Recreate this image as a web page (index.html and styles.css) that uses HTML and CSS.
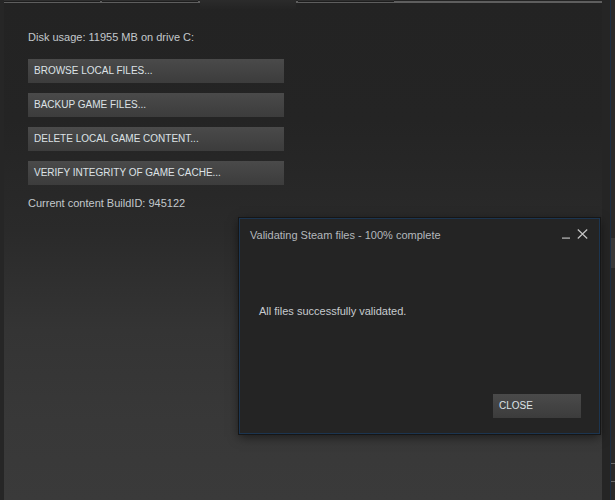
FILE: index.html
```html
<!DOCTYPE html>
<html>
<head>
<meta charset="utf-8">
<link rel="stylesheet" href="styles.css">
</head>
<body>
<div class="window">
  <div class="edge-left"></div>
  <div class="panel">
    <div class="tabs">
      <div class="tab-group first">
        <div class="tab-box"></div>
        <div class="tab-box"></div>
      </div>
      <div class="tab-active"></div>
      <div class="tab-group second">
        <div class="tab-box"></div>
      </div>
    </div>
    <div class="content">
      <p class="label">Disk usage: 11955 MB on drive C:</p>
      <div class="actions">
        <button class="btn">BROWSE LOCAL FILES...</button>
        <button class="btn">BACKUP GAME FILES...</button>
        <button class="btn">DELETE LOCAL GAME CONTENT...</button>
        <button class="btn">VERIFY INTEGRITY OF GAME CACHE...</button>
      </div>
      <p class="label build">Current content BuildID: 945122</p>
    </div>

    <div class="dialog">
      <div class="dialog-title">
        <span class="title-text">Validating Steam files - 100% complete</span>
        <div class="controls">
          <svg class="ctl-min" width="8" height="10" viewBox="0 0 8 10"><rect x="0" y="8.5" width="8" height="1.2" fill="#bdbdbd"/></svg>
          <svg class="ctl-close" width="11" height="10" viewBox="0 0 11 10"><path d="M0.8 0.5 L10.2 9.5 M10.2 0.5 L0.8 9.5" stroke="#c4c4c4" stroke-width="1.2" fill="none"/></svg>
        </div>
      </div>
      <p class="dialog-msg">All files successfully validated.</p>
      <div class="dialog-foot">
        <button class="btn btn-close">CLOSE</button>
      </div>
    </div>
  </div>
  <div class="edge-right">
    <div class="edge-dark"></div>
    <div class="edge-line"></div>
    <div class="edge-outer">
      <div class="tick t1"></div>
      <div class="tick t2"></div>
      <div class="tick t3"></div>
    </div>
  </div>
</div>
</body>
</html>
```

FILE: styles.css
```css
html, body {
  margin: 0;
  padding: 0;
  background: #232323;
}

body {
  font-family: "Liberation Sans", Arial, sans-serif;
  width: 615px;
  height: 500px;
  overflow: hidden;
}

.window {
  display: flex;
  height: 500px;
}

.edge-left {
  width: 4px;
  background: #262626;
  flex: none;
}

.panel {
  position: relative;
  width: 598px;
  flex: none;
  background: linear-gradient(#232323 0px, #242424 120px, #2a2a2a 230px, #343434 330px, #383838 420px, #3a3a3a 500px);
}

.tabs {
  display: flex;
  height: 5px;
}

.tab-group {
  display: flex;
  gap: 2px;
  align-items: flex-start;
  border-bottom: 2px solid #5e5e5e;
  height: 3px;
  box-sizing: border-box;
}

.tab-group.first {
  width: 196px;
}

.tab-group.second {
  width: 306px;
  padding-left: 2px;
}

.tab-box {
  width: 96px;
  height: 2px;
  background: #2f2f2f;
  border-bottom: 1px solid #1d1d1d;
  box-sizing: border-box;
}

.tab-active {
  width: 96px;
  height: 10px;
  background: linear-gradient(#2b2b2b, #232323);
}

.content {
  padding: 25px 0 0 24px;
}

.label {
  margin: 0;
  font-size: 11px;
  line-height: 14px;
  color: #c3c8cc;
}

.actions {
  display: flex;
  flex-direction: column;
  gap: 10px;
  margin-top: 15px;
  align-items: flex-start;
}

.btn {
  display: block;
  width: 256px;
  height: 24px;
  padding: 0 0 0 6px;
  margin: 0;
  border: none;
  text-align: left;
  font-family: "Liberation Sans", Arial, sans-serif;
  font-size: 10px;
  line-height: 24px;
  color: #dde2e6;
  background: linear-gradient(#4a4a4a, #3c3c3c);
  cursor: default;
}

.build {
  margin-top: 11px;
}

.dialog {
  position: absolute;
  left: 235px;
  top: 218px;
  width: 359px;
  height: 214px;
  background: #242424;
  border: 1px solid #1c3550;
  box-shadow: 0 0 0 1px #161616, 0 3px 10px rgba(0, 0, 0, 0.55);
  display: flex;
  flex-direction: column;
}

.dialog-title {
  display: flex;
  justify-content: space-between;
  align-items: flex-start;
  padding: 9px 10px 0 10px;
  height: 20px;
}

.title-text {
  font-size: 11px;
  line-height: 14px;
  color: #b4b8bc;
}

.controls {
  display: flex;
  gap: 7px;
  padding-top: 1px;
  padding-right: 1px;
}

.ctl-min, .ctl-close {
  display: block;
}

.dialog-msg {
  margin: 56px 0 0 19px;
  font-size: 11px;
  line-height: 14px;
  color: #c7cbcf;
}

.dialog-foot {
  margin-top: auto;
  display: flex;
  justify-content: flex-end;
  padding: 0 18px 15px 0;
}

.btn-close {
  width: 88px;
  padding-left: 6px;
}

.edge-right {
  flex: 1;
  display: flex;
}

.edge-dark {
  width: 8px;
  background: #252525;
}

.edge-line {
  width: 1px;
  background: #1b2f45;
}

.edge-outer {
  flex: 1;
  background: #2a2a2a;
  display: flex;
  flex-direction: column;
}

.tick {
  height: 1px;
  background: #6a6a6a;
}

.t1 {
  margin-top: 238px;
  height: 30px;
  background: #3a3a3a;
}

.t2 {
  margin-top: 195px;
}

.t3 {
  margin-top: 17px;
}
```
